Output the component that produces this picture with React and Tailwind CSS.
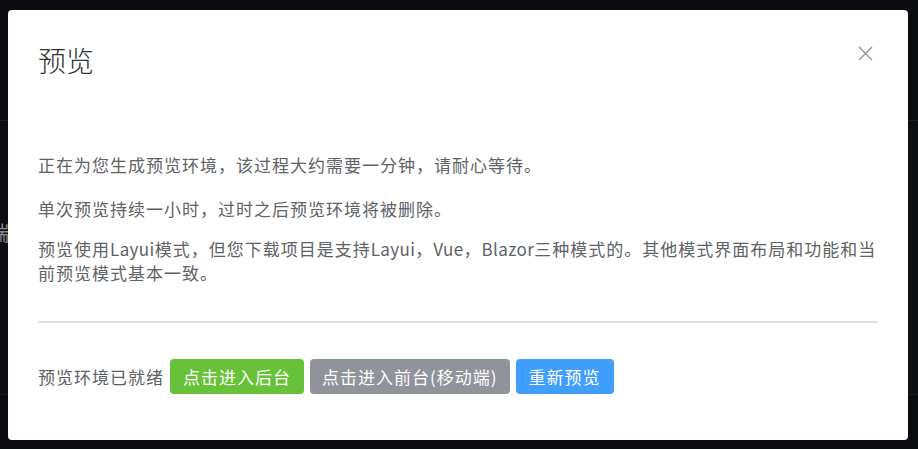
import React from "react";

const L = ({ children }) => <span className="tracking-[0.4px]">{children}</span>;

export default function App() {
  return (
    <div className="relative w-[918px] h-[449px] overflow-hidden bg-[#0a0b0e] font-['Noto_Sans_CJK_SC','Noto_Sans',sans-serif]">
      {/* underlying page */}
      <div className="absolute left-0 right-0 top-[120px] h-[275px] bg-[#0d0e12] border-t border-b border-[#1c1d22]" />
      <div className="absolute left-[-11px] top-[221px] text-[20px] leading-[24px] text-[#8a8c92]">端</div>

      <div className="relative ml-[8px] mt-[10px] w-[900px] h-[430px] bg-white rounded-[4px] px-[30px] flex flex-col">
        <div className="flex items-start justify-between pt-[30px]">
          <div className="text-[28px] leading-[40px] font-light text-[#303133]">预览</div>
          <svg
            className="mt-[6px] mr-[5px]"
            width="15"
            height="15"
            viewBox="0 0 15 15"
            fill="none"
            stroke="#909399"
            strokeWidth="1.4"
          >
            <path d="M1 1 L14 14 M14 1 L1 14" />
          </svg>
        </div>

        <div className="mt-[73px] text-[17px] leading-[24px] tracking-[1px] text-[#606266]">
          <p>正在为您生成预览环境，该过程大约需要一分钟，请耐心等待。</p>
          <p className="mt-[20px]">单次预览持续一小时，过时之后预览环境将被删除。</p>
          <p className="mt-[16px]">
            预览使用<L>Layui</L>模式，但您下载项目是支持<L>Layui</L>，<L>Vue</L>，<L>Blazor</L>三种模式的。其他模式界面布局和功能和当前预览模式基本一致。
          </p>
        </div>

        <div className="mt-[36px] h-[2px] bg-[#dcdfe6]" />

        <div className="mt-[36px] flex items-center gap-[6px] text-[17px] tracking-[1px]">
          <span className="text-[#606266]">预览环境已就绪</span>
          <button className="h-[35px] px-[13px] rounded-[4px] bg-[#67c23a] text-white">点击进入后台</button>
          <button className="h-[35px] px-[12px] rounded-[4px] bg-[#909399] text-white">点击进入前台(移动端)</button>
          <button className="h-[35px] px-[13px] rounded-[4px] bg-[#409eff] text-white">重新预览</button>
        </div>
      </div>
    </div>
  );
}
